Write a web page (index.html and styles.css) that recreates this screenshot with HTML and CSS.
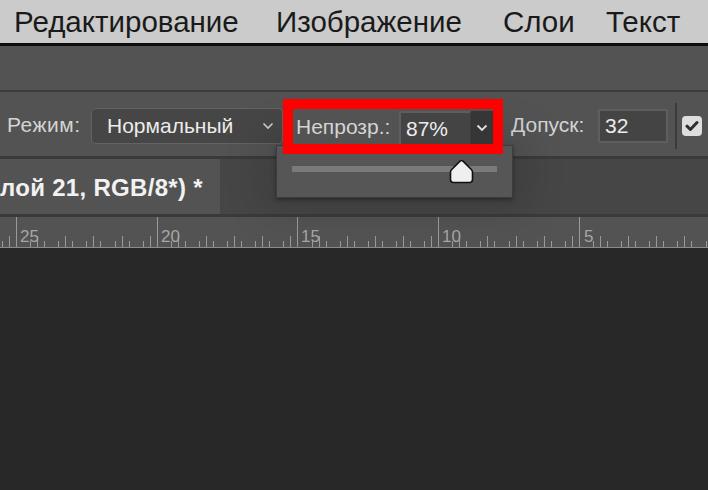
FILE: index.html
```html
<!DOCTYPE html>
<html lang="ru">
<head>
<meta charset="utf-8">
<link rel="stylesheet" href="styles.css">
</head>
<body>
<div class="menubar">
  <span class="menu-item m1">Редактирование</span>
  <span class="menu-item m2">Изображение</span>
  <span class="menu-item m3">Слои</span>
  <span class="menu-item m4">Текст</span>
</div>
<div class="appbar"></div>
<div class="options">
  <span class="label mode-label">Режим:</span>
  <div class="select">
    <span class="select-text">Нормальный</span>
    <svg class="chev" width="12" height="8" viewBox="0 0 12 8"><path d="M1.5 1.5 L6 6 L10.5 1.5" fill="none" stroke="#cfcfcf" stroke-width="1.6"/></svg>
  </div>
  <div class="highlight">
    <span class="label opac-label">Непрозр.:</span>
    <div class="num-input opac-input">87%</div>
    <div class="chev-btn">
      <svg width="12" height="8" viewBox="0 0 12 8"><path d="M1.5 1.5 L6 6 L10.5 1.5" fill="none" stroke="#e0e0e0" stroke-width="1.8"/></svg>
    </div>
  </div>
  <span class="label tol-label">Допуск:</span>
  <div class="num-input tol-input">32</div>
  <div class="sep"></div>
  <div class="checkbox">
    <svg width="14" height="12" viewBox="0 0 14 12"><path d="M2 6.2 L5.4 9.5 L12 2.5" fill="none" stroke="#2e2e2e" stroke-width="3" stroke-linecap="round" stroke-linejoin="round"/></svg>
  </div>
  <div class="popup">
    <div class="track"></div>
    <svg class="thumb" width="25" height="25" viewBox="0 0 25 25"><path d="M11 2.2 Q12.5 0.8 14 2.2 L22.3 10.5 Q23.5 11.7 23.5 13.3 V20.5 Q23.5 23.5 20.5 23.5 H4.5 Q1.5 23.5 1.5 20.5 V13.3 Q1.5 11.7 2.7 10.5 Z" fill="#efefef" stroke="#111" stroke-width="1.6"/></svg>
  </div>
</div>
<div class="tabrow">
  <div class="tab">лой 21, RGB/8*) *</div>
</div>
<div class="ruler">
  <div class="ticks"></div>
  <span class="rlabel" style="left:20px">25</span>
  <span class="rlabel" style="left:161px">20</span>
  <span class="rlabel" style="left:301px">15</span>
  <span class="rlabel" style="left:442px">10</span>
  <span class="rlabel" style="left:584px">5</span>
</div>
<div class="canvas"></div>
</body>
</html>
```

FILE: styles.css
```css
* { box-sizing: border-box; }
html, body { margin: 0; padding: 0; }
body {
  width: 708px;
  height: 490px;
  overflow: hidden;
  background: #282828;
  font-family: "Liberation Sans", Arial, sans-serif;
}
.menubar {
  height: 46px;
  background: #cbcbcb;
  border-bottom: 3px solid #0d0d0d;
  display: flex;
  align-items: center;
  padding-left: 14px;
  padding-top: 1px;
  white-space: nowrap;
}
.menu-item {
  font-size: 29.5px;
  color: #1a1a1a;
}
.m1 { width: 262px; }
.m2 { width: 227px; }
.m3 { width: 103px; }
.appbar {
  height: 46px;
  background: #535353;
  border-bottom: 2px solid #3b3b3b;
}
.options {
  position: relative;
  height: 67px;
  background: #535353;
  border-bottom: 3px solid #3a3a3a;
  display: flex;
  align-items: center;
  padding-top: 2px;
  white-space: nowrap;
}
.label {
  font-size: 21px;
  color: #d4d4d4;
}
.mode-label { margin-left: 7px; width: 84px; flex: none; letter-spacing: 0.5px; }
.select {
  flex: none;
  width: 192px;
  height: 36px;
  border: 1px solid #636363;
  border-radius: 5px;
  background: #464646;
  display: flex;
  align-items: center;
  padding-left: 15px;
  padding-right: 8px;
  margin-top: 2px;
}
.select-text {
  flex: 1;
  font-size: 21px;
  color: #ececec;
}
.highlight {
  flex: none;
  position: relative;
  z-index: 2;
  width: 220px;
  height: 55px;
  border: 10px solid #ff0000;
  background: #535353;
  display: flex;
  align-items: flex-end;
  margin-top: 3px;
}
.opac-label {
  align-self: center;
  margin-left: 3px;
  width: 103px;
  flex: none;
}
.num-input {
  flex: none;
  font-size: 21px;
  color: #ececec;
  background: #444444;
  border: 2px solid #5e5e5e;
  display: flex;
  align-items: center;
  padding-left: 5px;
}
.opac-input {
  width: 72px;
  height: 33px;
  border-bottom: none;
  border-right: 1px solid #3c3c3c;
}
.chev-btn {
  flex: none;
  width: 22px;
  height: 33px;
  background: #363636;
  display: flex;
  align-items: center;
  justify-content: center;
}
.tol-label { margin-left: 8px; width: 87px; flex: none; }
.tol-input {
  width: 70px;
  height: 34px;
  margin-top: 2px;
}
.sep {
  flex: none;
  width: 2px;
  height: 46px;
  background: #3a3a3a;
  margin-left: 7px;
  margin-top: 2px;
}
.checkbox {
  flex: none;
  width: 20px;
  height: 20px;
  margin-left: 5px;
  margin-top: 2px;
  border-radius: 4px;
  background: #dedede;
  display: flex;
  align-items: center;
  justify-content: center;
}
.popup {
  position: absolute;
  left: 276px;
  top: 53px;
  width: 237px;
  height: 53px;
  background: #565656;
  border: 1px solid #3c3c3c;
  box-shadow: 0 2px 4px rgba(0,0,0,0.35), 0 0 40px 14px rgba(0,0,0,0.12);
  z-index: 1;
}
.track {
  position: absolute;
  left: 15px;
  top: 20px;
  width: 205px;
  height: 6px;
  background: #7a7a7a;
}
.thumb {
  position: absolute;
  left: 172px;
  top: 13px;
}
.tabrow {
  height: 58px;
  background: #464646;
  border-bottom: 3px solid #3a3a3a;
}
.tab {
  width: 220px;
  height: 55px;
  background: #535353;
  color: #f2f2f2;
  font-size: 24px;
  font-weight: bold;
  letter-spacing: 0.3px;
  display: flex;
  align-items: center;
  padding-top: 3px;
  white-space: nowrap;
}
.ruler {
  position: relative;
  height: 31px;
  background: #535353;
  border-bottom: 1px solid #8a8a8a;
  overflow: hidden;
}
.ticks {
  position: absolute;
  left: 0; right: 0; bottom: 0; top: 0;
  background-image:
    repeating-linear-gradient(90deg, transparent 0 16px, #9a9a9a 16px 17px, transparent 17px 140.7px),
    repeating-linear-gradient(90deg, transparent 0 2px, #9a9a9a 2px 3px, transparent 3px 14.07px),
    repeating-linear-gradient(90deg, transparent 0 9px, #9a9a9a 9px 10px, transparent 10px 28.14px);
  background-size: 100% 100%, 100% 6px, 100% 11px;
  background-position: 0 0, 0 100%, 0 100%;
  background-repeat: no-repeat;
}
.rlabel {
  position: absolute;
  top: 10px;
  font-size: 17px;
  color: #a6a6a6;
}
.canvas {
  height: 245px;
  background: #282828;
}
```
